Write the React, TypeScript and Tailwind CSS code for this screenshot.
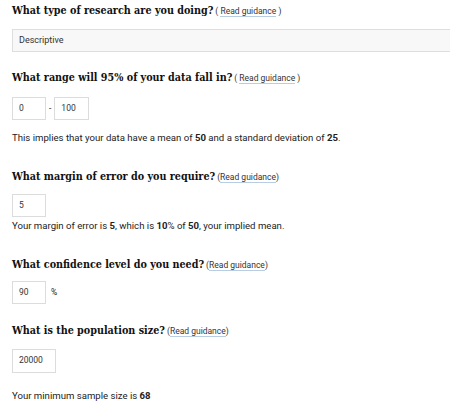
import React from "react";

const Guide = ({ spaced = true }: { spaced?: boolean }) => (
  <span className="ml-[2px] text-[8.5px] font-normal text-[#333]" style={{ fontFamily: "Roboto, sans-serif", fontStretch: "normal" }}>
    ({spaced ? " " : ""}
    <span className="border-b border-[#b8cce4]">Read guidance</span>
    {spaced ? " " : ""})
  </span>
);

const H = ({ children, spaced = true }: { children: React.ReactNode; spaced?: boolean }) => (
  <div
    className="text-[10.7px] font-bold leading-[16px] text-[#111]"
    style={{ fontFamily: '"DejaVu Serif Condensed", "DejaVu Serif", serif', fontStretch: "condensed" }}
  >
    {children}
    <Guide spaced={spaced} />
  </div>
);

const Box = ({ value, w, h = "h-[23px]" }: { value: string; w: string; h?: string }) => (
  <div className={`${w} ${h} border border-[#dcdcdc] bg-white pl-[6px] text-[8.5px] leading-[21px] text-[#333]`}>{value}</div>
);

export default function App() {
  return (
    <div className="w-[450px] h-[413px] overflow-hidden bg-white pl-[12px] text-[9.6px] text-[#222]" style={{ fontFamily: "Roboto, sans-serif" }}>
      <div className="pt-[3px]">
        <H>What type of research are you doing?</H>
      </div>
      <div className="mt-[10px] h-[23px] w-[460px] border border-[#dedede] bg-[#f8f8f8] pl-[6px] text-[9px] leading-[21px] text-[#333]">Descriptive</div>

      <div className="mt-[18px]">
        <H>What range will 95% of your data fall in?</H>
      </div>
      <div className="mt-[11px] flex items-center">
        <Box value="0" w="w-[34px]" />
        <span className="mx-[3px] text-[8.5px]">-</span>
        <Box value="100" w="w-[35px]" />
      </div>
      <div className="mt-[11px] leading-[14px]">
        This implies that your data have a mean of <b>50</b> and a standard deviation of <b>25</b>.
      </div>

      <div className="mt-[24px]">
        <H spaced={false}>What margin of error do you require?</H>
      </div>
      <div className="mt-[9px]">
        <Box value="5" w="w-[34px]" />
      </div>
      <div className="mt-[2px] leading-[14px]">
        Your margin of error is <b>5</b>, which is <b>10</b>% of <b>50</b>, your implied mean.
      </div>

      <div className="mt-[24px]">
        <H spaced={false}>What confidence level do you need?</H>
      </div>
      <div className="mt-[8px] flex items-center">
        <Box value="90" w="w-[34px]" />
        <span className="ml-[5px] text-[8.5px]">%</span>
      </div>

      <div className="mt-[19px]">
        <H spaced={false}>What is the population size?</H>
      </div>
      <div className="mt-[10px]">
        <Box value="20000" w="w-[44px]" h="h-[24px]" />
      </div>
      <div className="mt-[16px] leading-[14px]">
        Your minimum sample size is <b>68</b>
      </div>
    </div>
  );
}
